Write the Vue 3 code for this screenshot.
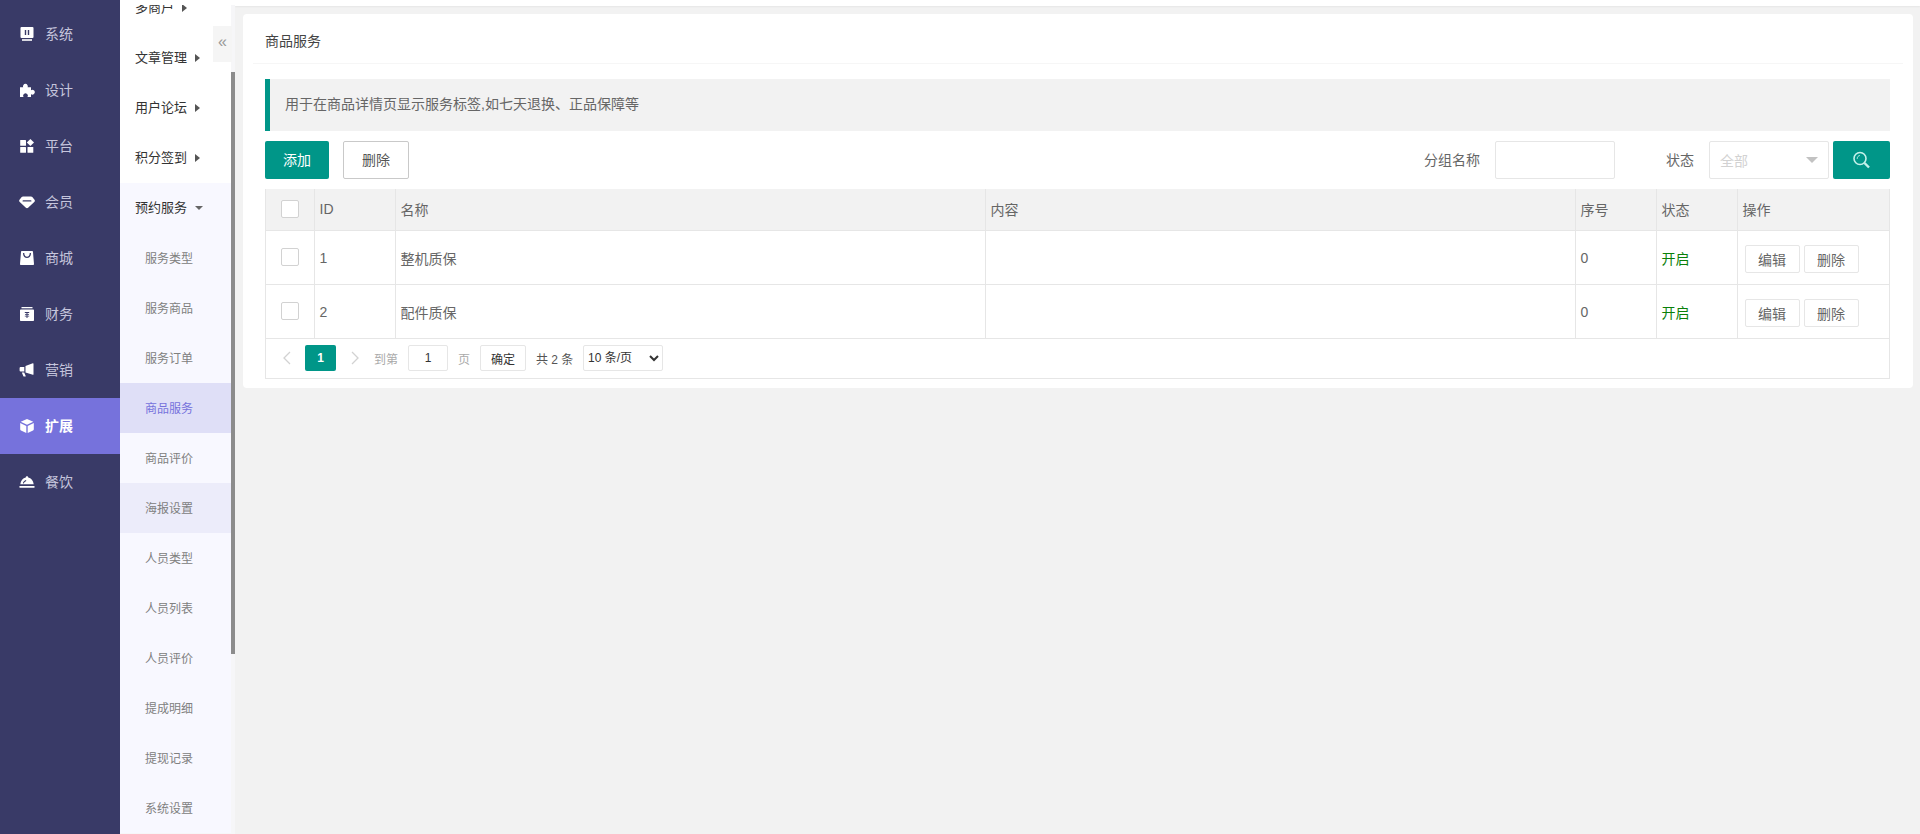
<script setup>
import { ref } from 'vue'

const railItems = ref([
  { name: '系统', icon: 'system' },
  { name: '设计', icon: 'design' },
  { name: '平台', icon: 'platform' },
  { name: '会员', icon: 'member' },
  { name: '商城', icon: 'shop' },
  { name: '财务', icon: 'finance' },
  { name: '营销', icon: 'market' },
  { name: '扩展', icon: 'extend', active: true },
  { name: '餐饮', icon: 'food' },
])

const groups = ['多商户', '文章管理', '用户论坛', '积分签到']

const subItems = ref([
  { name: '服务类型' },
  { name: '服务商品' },
  { name: '服务订单' },
  { name: '商品服务', active: true },
  { name: '商品评价' },
  { name: '海报设置', hover: true },
  { name: '人员类型' },
  { name: '人员列表' },
  { name: '人员评价' },
  { name: '提成明细' },
  { name: '提现记录' },
  { name: '系统设置' },
])

const rows = ref([
  { id: 1, name: '整机质保', content: '', sort: 0 },
  { id: 2, name: '配件质保', content: '', sort: 0 },
])
</script>

<template>
  <div class="layout">
    <aside class="rail">
      <div
        v-for="item in railItems"
        :key="item.name"
        class="rail-item"
        :class="{ active: item.active }"
      >
        <svg class="rail-icon" viewBox="0 0 16 16" fill="currentColor">
          <template v-if="item.icon === 'system'">
            <path fill-rule="evenodd" d="M2.5 1h11a1 1 0 0 1 1 1v9a1 1 0 0 1-1 1h-11a1 1 0 0 1-1-1V2a1 1 0 0 1 1-1zM5.8 4v5h1.4V4zM8.8 4v5h1.4V4z" />
            <rect x="3" y="13.2" width="10" height="1.6" />
          </template>
          <path v-else-if="item.icon === 'design'" d="M1 5.2H4.2A2.4 2.4 0 1 1 8.6 5.2H12V8.2A2.4 2.4 0 1 1 12 12.2V15H8.4A2.3 2.3 0 1 0 4.600 15H1Z" />
          <template v-else-if="item.icon === 'platform'">
            <rect x="1.200" y="2" width="5.800" height="5.800" rx=".5" />
            <rect x="1.200" y="9" width="5.800" height="5.800" rx=".5" />
            <rect x="8.500" y="9" width="5.800" height="5.800" rx=".5" />
            <path d="M11.400 1 15 4.500 11.400 8 7.800 4.500z" />
          </template>
          <path v-else-if="item.icon === 'member'" fill-rule="evenodd" d="M4 2.500h8c.5 0 1 .2 1.300.6l2.200 2.600c.5.600.5 1.400 0 2l-6.400 6c-.6.600-1.600.600-2.200 0l-6.400-6c-.5-.6-.5-1.400 0-2l2.200-2.600c.3-.4.800-.6 1.300-.6zM4.300 6.200c-.5 0-.8.300-.8.700s.300.700.8.700h7.400c.5 0 .8-.3.800-.7s-.3-.7-.8-.7z" />
          <path v-else-if="item.icon === 'shop'" fill-rule="evenodd" d="M3 1h10c.5 0 1 .4 1 1l1 12c0 .6-.4 1-1 1H2c-.6 0-1-.4-1-1L2 2c0-.6.500-1 1-1zM4 3c0 3 1.600 5 4 5s4-2 4-5h-1.300c0 2.200-1 3.700-2.700 3.700S5.300 5.200 5.300 3z" />
          <template v-else-if="item.icon === 'finance'">
            <rect x="2.500" y="1" width="11" height="1.300" />
            <path fill-rule="evenodd" d="M2 3.500h12c.6 0 1 .4 1 1V14c0 .6-.4 1-1 1H2c-.6 0-1-.4-1-1V4.500c0-.6.400-1 1-1zM5.800 6v.9h1.700v1H6v.9h1.500v.9H5.800v.9h1.700V12h1v-1.400h1.700v-.9H8.500v-.9H10v-.9H8.500v-1h1.700V6z" />
          </template>
          <template v-else-if="item.icon === 'market'">
            <path d="M13.800 1.200c.4-.1.700.2.700.6v10.400c0 .4-.3.700-.7.600L6.500 10.500V4z" />
            <path d="M1.500 5h3.800v4.500H1.500c-.5 0-.9-.4-.9-.9V5.900c0-.5.400-.9.900-.9z" />
            <path d="M2.800 10.500h2.400l1.500 3.500c.1.300-.1.600-.4.600H5c-.3 0-.5-.1-.6-.4z" />
          </template>
          <template v-else-if="item.icon === 'extend'">
            <path d="M8 1 14.300 3.700 8 6.700 1.700 3.700z" />
            <path d="M1.200 5 7.300 7.900V15L2 12.500c-.5-.2-.8-.7-.8-1.200z" />
            <path d="M14.800 5 8.700 7.900V15l5.300-2.500c.5-.2.800-.7.800-1.200z" />
          </template>
          <template v-else-if="item.icon === 'food'">
            <path fill-rule="evenodd" d="M8 2.200c.7 0 1.200.5 1.200 1.100v.3c3 .6 5.100 3.200 5.500 6.600H1.300c.4-3.400 2.500-6 5.500-6.600v-.3c0-.6.500-1.100 1.200-1.100zM7 6.100C5.400 6.600 4.300 7.700 3.900 9.200l1 .3c.3-1.100 1.200-2 2.400-2.400z" />
            <rect x=".5" y="12" width="15" height="1.800" rx=".4" />
          </template>
        </svg>
        <span class="rail-name">{{ item.name }}</span>
      </div>
    </aside>

    <nav class="submenu">
      <div class="submenu-list">
        <div v-for="group in groups" :key="group" class="group-title">
          {{ group }}<i class="arrow-right"></i>
        </div>
        <div class="group-open">
          <div class="group-title">预约服务<i class="arrow-down"></i></div>
          <div
            v-for="sub in subItems"
            :key="sub.name"
            class="sub-item"
            :class="{ active: sub.active, hover: sub.hover }"
          >
            {{ sub.name }}
          </div>
        </div>
      </div>
      <div class="scroll-thumb"></div>
      <div class="collapse-btn">«</div>
    </nav>

    <main class="main">
      <div class="top-strip"></div>
      <section class="card">
        <div class="card-title">商品服务</div>
        <div class="card-body">
          <div class="notice">用于在商品详情页显示服务标签,如七天退换、正品保障等</div>

          <div class="toolbar">
            <button class="btn btn-primary">添加</button>
            <button class="btn btn-plain">删除</button>
            <div class="filters">
              <label class="filter-label">分组名称</label>
              <input class="filter-input" type="text" />
              <label class="filter-label status-label">状态</label>
              <div class="fake-select">
                <span>全部</span>
                <i class="select-caret"></i>
              </div>
              <button class="btn btn-primary btn-search">
                <svg width="18" height="18" viewBox="0 0 18 18" fill="none">
                  <circle cx="7" cy="7.500" r="6" stroke="#c4f1ea" stroke-width="1.600" />
                  <path d="M4.200 7.800C4.200 6 5.200 4.800 6.800 4.500" stroke="#c4f1ea" stroke-width="1" />
                  <path d="M11.500 12l4.500 4.500" stroke="#c4f1ea" stroke-width="2.400" />
                </svg>
              </button>
            </div>
          </div>

          <div class="table-box">
            <table class="data-table">
              <colgroup>
                <col style="width: 48px" />
                <col style="width: 81px" />
                <col style="width: 590px" />
                <col style="width: 590px" />
                <col style="width: 81px" />
                <col style="width: 81px" />
                <col />
              </colgroup>
              <thead>
                <tr>
                  <th class="check-cell"><i class="check"></i></th>
                  <th>ID</th>
                  <th>名称</th>
                  <th>内容</th>
                  <th>序号</th>
                  <th>状态</th>
                  <th>操作</th>
                </tr>
              </thead>
              <tbody>
                <tr v-for="row in rows" :key="row.id">
                  <td class="check-cell"><i class="check"></i></td>
                  <td>{{ row.id }}</td>
                  <td>{{ row.name }}</td>
                  <td>{{ row.content }}</td>
                  <td>{{ row.sort }}</td>
                  <td class="status-on">开启</td>
                  <td class="actions">
                    <button class="mini-btn">编辑</button>
                    <button class="mini-btn">删除</button>
                  </td>
                </tr>
              </tbody>
            </table>
            <div class="pager">
              <svg class="pager-arrow" width="10" height="16" viewBox="0 0 10 16" fill="none">
                <path d="M8 2 2 8l6 6" stroke="#d2d2d2" stroke-width="1.300" />
              </svg>
              <span class="page-current">1</span>
              <svg class="pager-arrow next" width="10" height="16" viewBox="0 0 10 16" fill="none">
                <path d="M2 2l6 6-6 6" stroke="#d2d2d2" stroke-width="1.300" />
              </svg>
              <span class="pager-text to-page">到第</span>
              <input class="page-input" type="text" value="1" />
              <span class="pager-text">页</span>
              <button class="page-ok">确定</button>
              <span class="pager-total">共 2 条</span>
              <select class="page-size">
                <option>10 条/页</option>
              </select>
            </div>
          </div>
        </div>
      </section>
    </main>
  </div>
</template>

<style>
html,
body {
  margin: 0;
  height: 100%;
  overflow: hidden;
}
</style>

<style scoped>
.layout {
  display: flex;
  height: 834px;
  background: #f2f2f2;
  color: #666;
  font-family: "Liberation Sans", "Noto Sans CJK SC", sans-serif;
  font-size: 14px;
  overflow: hidden;
}

.rail {
  width: 120px;
  flex: none;
  padding-top: 6px;
  box-sizing: border-box;
  background: #393a67;
}

.rail-item {
  height: 56px;
  display: flex;
  align-items: center;
  padding-left: 19px;
  gap: 10px;
  color: #c5c5dc;
  box-sizing: border-box;
}

.rail-name {
  padding-bottom: 2px;
}

.rail-item .rail-icon {
  width: 16px;
  height: 16px;
  color: #fff;
  flex: none;
}

.rail-item.active {
  background: #7672dc;
  color: #fff;
  font-weight: 700;
}

.submenu {
  position: relative;
  width: 115px;
  flex: none;
  background: #f6f6f8;
  overflow: hidden;
}

/* header bar lies over the scrolled list */
.submenu::before {
  content: "";
  position: absolute;
  top: 0;
  left: 0;
  right: 0;
  height: 5px;
  background: #fff;
}

.submenu-list {
  margin-top: -17px;
  width: 111px;
  background: #fff;
}

.group-title {
  height: 50px;
  line-height: 50px;
  padding-left: 15px;
  font-size: 13px;
  color: #333;
}

.arrow-right,
.arrow-down {
  display: inline-block;
  width: 0;
  height: 0;
  margin-left: 8px;
  border-style: solid;
}

.arrow-right {
  border-width: 4px 0 4px 5px;
  border-color: transparent transparent transparent #555;
}

.arrow-down {
  border-width: 4px 4px 0;
  border-color: #666 transparent transparent;
  vertical-align: 2px;
}

.group-open {
  background: #f8f8ff;
}

.sub-item {
  height: 50px;
  line-height: 52px;
  padding-left: 25px;
  font-size: 12px;
  color: #808080;
}

.sub-item.active {
  background: #dfdff7;
  color: #7672dc;
}

.sub-item.hover {
  background: #ececfa;
}

.scroll-thumb {
  position: absolute;
  top: 72px;
  right: 0;
  width: 4px;
  height: 582px;
  background: #8c8c8c;
}

.collapse-btn {
  position: absolute;
  top: 26px;
  right: 3px;
  width: 19px;
  height: 36px;
  line-height: 32px;
  text-align: center;
  background: #f5f5f5;
  color: #999;
  font-size: 16px;
}

.main {
  flex: 1;
  min-width: 0;
}

.top-strip {
  height: 6px;
  background: #fff;
  box-shadow: 0 1px 2px rgba(0, 0, 0, 0.05);
}

.card {
  margin: 8px 7px 0 8px;
  background: #fff;
  border-radius: 4px;
  padding-bottom: 9px;
}

.card-title {
  height: 49px;
  line-height: 54px;
  margin: 0 10px 0 10px;
  padding-left: 12px;
  border-bottom: 1px solid #f6f6f6;
  font-size: 14px;
  color: #444;
}

.card-body {
  padding: 15px 23px 0 22px;
}

.notice {
  height: 52px;
  line-height: 50px;
  padding-left: 15px;
  background: #f2f2f2;
  border-left: 5px solid #009688;
  font-size: 14px;
  color: #666;
}

.toolbar {
  display: flex;
  align-items: center;
  margin: 10px 0;
}

.btn {
  height: 38px;
  border-radius: 2px;
  font-family: inherit;
  font-size: 14px;
  padding: 0 0 2px;
  box-sizing: border-box;
}

.btn-primary {
  width: 64px;
  background: #009688;
  border: none;
  color: #fff;
}

.btn-plain {
  width: 66px;
  margin-left: 14px;
  background: #fff;
  border: 1px solid #c9c9c9;
  color: #555;
}

.filters {
  margin-left: auto;
  display: flex;
  align-items: center;
}

.filter-label {
  color: #666;
  margin-right: 15px;
  font-size: 14px;
  padding-bottom: 2px;
}

.filter-input {
  width: 120px;
  height: 38px;
  box-sizing: border-box;
  border: 1px solid #e6e6e6;
  border-radius: 2px;
  outline: none;
}

.status-label {
  margin-left: 51px;
}

.fake-select {
  width: 120px;
  height: 38px;
  box-sizing: border-box;
  border: 1px solid #e6e6e6;
  border-radius: 2px;
  padding: 0 10px;
  display: flex;
  align-items: center;
  justify-content: space-between;
  color: #d2d2d2;
  font-size: 14px;
}

.select-caret {
  width: 0;
  height: 0;
  border-style: solid;
  border-width: 6px 6px 0;
  border-color: #c2c2c2 transparent transparent;
}

.btn-search {
  width: 57px;
  margin-left: 4px;
  padding: 0;
  display: flex;
  align-items: center;
  justify-content: center;
}

.table-box {
  border: 1px solid #e6e6e6;
  border-top: none;
}

.data-table {
  width: 100%;
  table-layout: fixed;
  border-collapse: collapse;
}

.data-table th,
.data-table td {
  padding: 1px 5px 0;
  text-align: left;
  font-weight: 400;
  font-size: 14px;
  color: #666;
  border-left: 1px solid #e6e6e6;
  border-bottom: 1px solid #e6e6e6;
  box-sizing: border-box;
}

.data-table th {
  padding: 0 5px;
  height: 41px;
  background: #f2f2f2;
}

.data-table th:first-child,
.data-table td:first-child {
  border-left: none;
}

.data-table td {
  height: 54px;
}

.data-table .check-cell {
  padding: 0 0 0 15px;
}

.check {
  display: block;
  width: 16px;
  height: 16px;
  border: 1px solid #d2d2d2;
  border-radius: 2px;
  background: #fff;
}

.data-table .status-on {
  color: #0a800a;
}

.actions .mini-btn + .mini-btn {
  margin-left: 4px;
}

.mini-btn {
  width: 55px;
  height: 28px;
  padding: 0;
  border: 1px solid #e6e6e6;
  border-radius: 2px;
  background: #fff;
  color: #666;
  font-family: inherit;
  font-size: 14px;
  vertical-align: top;
}

.data-table td.actions {
  padding: 4px 0 0 7px;
}

.pager {
  height: 39px;
  display: flex;
  align-items: center;
  padding-left: 16px;
  font-size: 12px;
  color: #666;
}

.pager-arrow {
  flex: none;
}

.page-current {
  width: 31px;
  height: 26px;
  line-height: 26px;
  margin-left: 13px;
  text-align: center;
  background: #009688;
  border-radius: 2px;
  color: #fff;
  font-weight: 700;
}

.pager-arrow.next {
  margin-left: 14px;
}

.pager-text {
  color: #aaa;
}

.to-page {
  margin-left: 14px;
}

.page-input {
  width: 40px;
  height: 26px;
  margin: 0 10px;
  box-sizing: border-box;
  border: 1px solid #e6e6e6;
  border-radius: 2px;
  text-align: center;
  font-family: inherit;
  font-size: 12px;
  color: #333;
  outline: none;
}

.page-ok {
  width: 46px;
  height: 26px;
  margin-left: 10px;
  padding: 0;
  border: 1px solid #e6e6e6;
  border-radius: 2px;
  background: #fff;
  color: #333;
  font-family: inherit;
  font-size: 12px;
}

.pager-total {
  width: 37px;
  margin: 0 10px;
  color: #555;
  white-space: nowrap;
}

.page-size {
  width: 80px;
  height: 26px;
  border: 1px solid #e6e6e6;
  border-radius: 2px;
  background: #fff;
  color: #333;
  font-family: inherit;
  font-size: 12px;
  outline: none;
}
</style>
